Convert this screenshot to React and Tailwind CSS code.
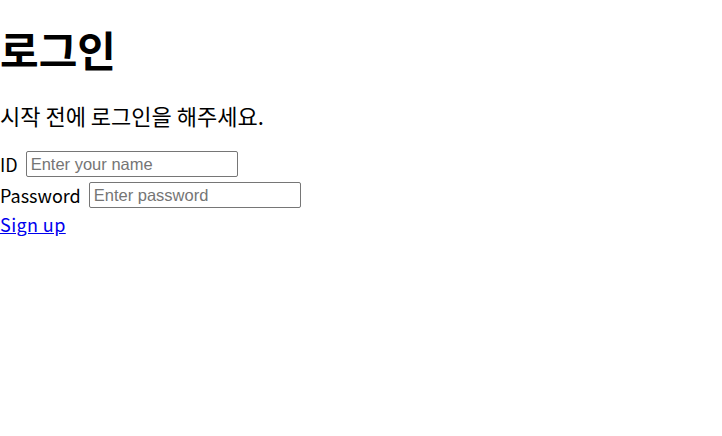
import React from 'react';

const App = () => {
  return (
    <div className="min-h-screen bg-white text-black font-['Noto_Sans_CJK_KR',sans-serif]">
      <h1 className="pt-[24px] text-[42px] font-bold leading-[50px]">로그인</h1>
      <p className="mt-[27px] text-[22px] leading-[29px]">시작 전에 로그인을 해주세요.</p>

      <form className="mt-[21px] flex flex-col gap-[5px] text-[18px]">
        <div className="flex items-center gap-[8px] h-[26px]">
          <label htmlFor="id">ID</label>
          <input
            id="id"
            type="text"
            placeholder="Enter your name"
            className="w-[212px] h-[26px] rounded-[2px] border border-[#767676] px-[4px] font-['Liberation_Sans',Arial,sans-serif] text-[16.5px] placeholder:text-[#757575]"
          />
        </div>
        <div className="flex items-center gap-[8px] h-[26px]">
          <label htmlFor="pw">Password</label>
          <input
            id="pw"
            type="password"
            placeholder="Enter password"
            className="w-[212px] h-[26px] rounded-[2px] border border-[#767676] px-[4px] font-['Liberation_Sans',Arial,sans-serif] text-[16.5px] placeholder:text-[#757575]"
          />
        </div>
        <a href="#" className="-mt-[2px] text-[#0000ee] underline leading-[26px] tracking-[0.4px]">
          Sign up
        </a>
      </form>
    </div>
  );
};

export default App;
